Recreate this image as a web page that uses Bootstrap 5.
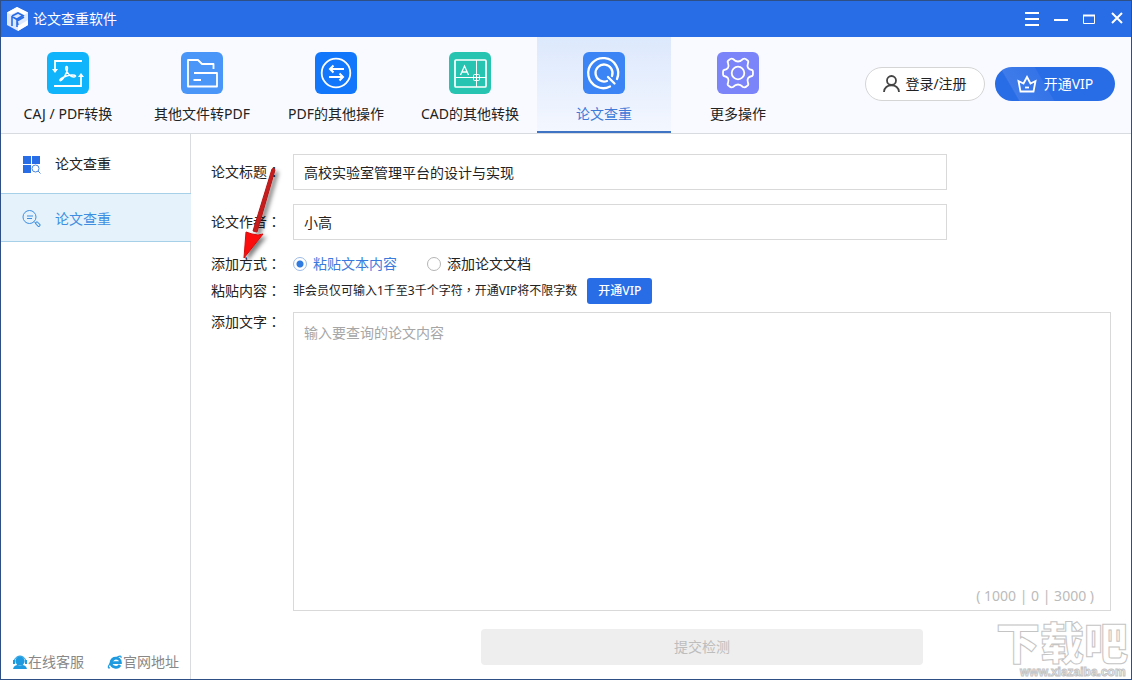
<!DOCTYPE html>
<html lang="zh-CN">
<head>
<meta charset="utf-8">
<meta name="viewport" content="width=device-width, initial-scale=1">
<title>论文查重软件</title>
<link href="https://cdn.jsdelivr.net/npm/bootstrap@5.3.0/dist/css/bootstrap.min.css" rel="stylesheet">
<script src="https://cdn.jsdelivr.net/npm/bootstrap@5.3.0/dist/js/bootstrap.bundle.min.js" defer></script>
<style>
  :root { --brand: #286ce6; --line: #d9d9d9; }
  body { font-family: "Noto Sans", "Noto Sans CJK SC", sans-serif; font-size: 14px; line-height: 20px; color: #222; }
  a { text-decoration: none; color: inherit; }
  svg { display: block; flex: none; }
  .app-window { min-height: 100vh; border: 1px solid #2d4f86; background: #fff; overflow: hidden; }
  .title-bar { background: var(--brand); height: 36px; padding: 0 5px; color: #fff; }
  .title-bar button { border: 0; background: none; padding: 0; color: #fff; }
  .window-tools { gap: 14px; padding-right: 2px; }
  .tool-bar { background: #f8faff; border-bottom: 1px solid #d8dbe0; padding-right: 16px; }
  .tool-tab { width: 134px; height: 96px; padding-top: 15px; gap: 10px; border-bottom: 2px solid transparent; color: #222; white-space: nowrap; }
  .tool-tab.active { color: #3f7ad8; border-bottom-color: #3f73c4; background: linear-gradient(#dce8fc, #f3f7ff); }
  .account { gap: 10px; margin-bottom: 2px; }
  .pill { height: 34px; width: 120px; border-radius: 17px; padding: 0; font-size: 14px; line-height: 20px; gap: 5px; white-space: nowrap; }
  .pill-login, .pill-login:hover { background: #fff; border: 1px solid #d5d5d5; color: #222; }
  .pill-vip, .pill-vip:hover { border: 0; color: #fff; gap: 7px; background: linear-gradient(60deg, var(--brand) 17%, #3f7be9 18%, #3474e8 42%, var(--brand) 43%); }
  .side-bar { width: 190px; border-right: 1px solid #d8dbe0; }
  .side-link { height: 49px; padding-left: 21px; gap: 14px; border: 1px solid transparent; border-width: 1px 0; }
  .side-link:first-child { height: 59px; border: 0; padding-top: 1px; }
  .side-link.active { background: #e5f2fb; border-color: #a6cfe8; color: #3f8fe0; margin-right: -1px; padding-top: 2px; }
  .side-foot { color: #888; padding: 0 11px 7px 11px; }
  .form-area { padding: 20px 20px 14px; }
  .line-label { width: 82px; flex: none; white-space: nowrap; }
  .gap-row { margin-top: 14px; }
  .ways { gap: 30px; }
  .way-item { gap: 6px; }
  .text-field { width: 80%; height: 36px; border: 1px solid var(--line); border-radius: 0; padding: 0 10px; font-size: 14px; line-height: 20px; color: #222; }
  .text-area { border: 1px solid var(--line); border-radius: 0; padding: 10px; font-size: 14px; line-height: 20px; resize: none; }
  .text-area::placeholder { color: #a6a6a6; }
  .form-check-input.way { width: 14px; height: 14px; margin: 0; border: 1px solid #b5b5b5; box-shadow: none; background-color: #fff; }
  .form-check-input.way:checked { background-color: #fff; border-color: #9dbbe4; background-image: radial-gradient(circle, #2f7be0 3px, #fff 4px); }
  .way:checked + label { color: #3a7bdd; }
  .note-row { gap: 10px; }
  .note { font-size: 12px; }
  .small-vip { height: 26px; width: 65px; padding: 0; border: 0; border-radius: 3px; background: var(--brand); color: #fff; font-size: 12px; line-height: 20px; font-weight: 500; }
  .counter { position: absolute; right: 17px; bottom: 5px; color: #bbb; white-space: pre; }
  .submit-row { margin-top: 18px; }
  .submit { width: 54%; height: 36px; border: 0; border-radius: 4px; }
  .submit:disabled { background: #eee; color: #bdbdbd; opacity: 1; font-size: 14px; line-height: 20px; }
  .pointer { position: absolute; left: 238px; top: 162px; pointer-events: none; }
  .site-mark { position: absolute; right: 1px; bottom: 0; pointer-events: none; }
</style>
</head>
<body>
<div class="app-window position-relative d-flex flex-column">
  <header class="title-bar d-flex align-items-center justify-content-between">
    <div class="d-flex align-items-center gap-1">
      <svg width="23" height="24" viewBox="0 0 23 24"><path d="M11 0 22 5.500v12.500l-10 6L1 18V5.500z" fill="#dfe9fd"/><path d="M11 0l11 5.500-4 2.500-7-3.500L5 7.500 1 5.500z" fill="#fff"/><path d="M12 24v-5l10-6v5z" fill="#fff"/><path d="M6 9l6-3 5 2.500-6 3.500v8M6 9v10M11 12.500L6 9.500M12 18l-1-4 7-4" stroke="#286ce6" stroke-width="1.600" fill="none"/></svg>
      <span>论文查重软件</span>
    </div>
    <div class="window-tools d-flex align-items-center">
      <button aria-label="菜单"><svg width="16" height="16" viewBox="0 0 16 16"><path d="M1 2h14M1 8h14M1 14h14" stroke="#fff" stroke-width="2"/></svg></button>
      <button aria-label="最小化"><svg width="14" height="16" viewBox="0 0 14 16"><path d="M0 9h14" stroke="#fff" stroke-width="2"/></svg></button>
      <button aria-label="最大化"><svg width="14" height="16" viewBox="0 0 14 16"><path d="M1.500 4.500h11v8h-11z" fill="none" stroke="#fff"/><path d="M1 4.500h12" stroke="#fff" stroke-width="2"/></svg></button>
      <button aria-label="关闭"><svg width="14" height="16" viewBox="0 0 14 16"><path d="M2 2l10 10M12 2L2 12" stroke="#fff" stroke-width="2"/></svg></button>
    </div>
  </header>

  <div class="tool-bar d-flex align-items-center">
    <nav class="d-flex flex-grow-1">
      <a href="#" class="tool-tab d-flex flex-column align-items-center">
        <svg width="42" height="42" viewBox="0 0 42 42"><rect width="42" height="42" rx="6" fill="#0fb4fb"/><g fill="none" stroke="#fff" stroke-width="1.800"><path d="M35 9H8v9M7 34h27V24"/><path d="M19.500 14.500c-2 .5 0 6 3.500 9 2 1.700 6 2 5.500.3-.8-1.600-6-.8-9 .2s-7.500 3.500-6.500 4.500 4.500-3 6.500-8c1-2.500 1.500-6 0-6z" stroke-width="1.500"/></g><path d="M5 17h6l-3 4zM31 25h6l-3-4z" fill="#fff"/></svg>
        <span>CAJ / PDF转换</span></a>
      <a href="#" class="tool-tab d-flex flex-column align-items-center">
        <svg width="42" height="42" viewBox="0 0 42 42"><rect width="42" height="42" rx="6" fill="#4a96f8"/><path d="M32.500 17v-5H21l-4-4H7v26.500h29V21H13M12.500 28H20" fill="none" stroke="#fff" stroke-width="1.800" stroke-linejoin="round"/></svg>
        <span>其他文件转PDF</span></a>
      <a href="#" class="tool-tab d-flex flex-column align-items-center">
        <svg width="42" height="42" viewBox="0 0 42 42"><rect width="42" height="42" rx="6" fill="#1277fb"/><g fill="none" stroke="#fff"><circle cx="21" cy="21" r="14.300" stroke-width="1.800"/><path d="M29 17H15M18.500 13.500L15 17l3.500 3.500M14 25h14M24.500 21.500L28 25l-3.500 3.500" stroke-width="2"/></g></svg>
        <span>PDF的其他操作</span></a>
      <a href="#" class="tool-tab d-flex flex-column align-items-center">
        <svg width="42" height="42" viewBox="0 0 42 42"><rect width="42" height="42" rx="6" fill="#27c5b1"/><g fill="none" stroke="#fff"><rect x="6" y="8" width="31" height="27" rx="1" stroke-width="1.700"/><path d="M7 25.500h30M27.500 8v27"/><rect x="24.500" y="22.500" width="6" height="6" rx="1"/><path d="M11.500 23l4-9 4 9M13 20h5" stroke-width="1.300"/></g></svg>
        <span>CAD的其他转换</span></a>
      <a href="#" class="tool-tab active d-flex flex-column align-items-center">
        <svg width="42" height="42" viewBox="0 0 42 42"><rect width="42" height="42" rx="6" fill="#3a84f5"/><g fill="none" stroke="#fff" stroke-width="2.300" stroke-linecap="round"><path d="M27 34.500A15 15 0 1 1 34 27M24 29A8.500 8.500 0 1 1 29 24M25 25l6.500 6.500"/></g></svg>
        <span>论文查重</span></a>
      <a href="#" class="tool-tab d-flex flex-column align-items-center">
        <svg width="42" height="42" viewBox="0 0 42 42"><rect width="42" height="42" rx="6" fill="#7b84f9"/><g fill="none" stroke="#fff" stroke-width="1.800" stroke-linejoin="round"><circle cx="21" cy="21" r="6.300"/><path d="M16 7q-2-1-4 1-2 1-1 3 2 6-4 7-1 0-1 3t1 3q6 1 4 7-1 2 1 3 2 2 4 1 5-5 10 0 2 1 4-1 2-1 1-3-2-6 4-7 1 0 1-3t-1-3q-6-1-4-7 1-2-1-3-2-2-4-1-5 5-10 0z"/></g></svg>
        <span>更多操作</span></a>
    </nav>
    <div class="account d-flex">
      <button class="btn pill pill-login d-flex align-items-center justify-content-center">
        <svg width="17" height="18" viewBox="0 0 17 18" fill="none" stroke="#444" stroke-width="1.800"><circle cx="8.500" cy="5.500" r="4.500"/><path d="M1 17c0-9 15-9 15 0"/></svg>登录/注册</button>
      <button class="btn pill pill-vip d-flex align-items-center justify-content-center">
        <svg width="20" height="18" viewBox="0 0 20 18" fill="none" stroke="#fff" stroke-width="1.800"><path d="M1.500 6l2 10.500h13l2-10.500-5 2.500L10 2 6.500 8.500z"/><path d="M8 12.500h4"/></svg>开通VIP</button>
    </div>
  </div>

  <div class="d-flex flex-grow-1">
    <aside class="side-bar flex-shrink-0 d-flex flex-column justify-content-between">
      <nav>
        <a href="#" class="side-link d-flex align-items-center">
          <svg width="19" height="19" viewBox="0 0 19 19"><path d="M1 1h8v8H1zM10 1h8v8h-8zM1 10h8v8H1z" fill="#286ce6"/><path d="M9.500 9.500h9v9h-9z" fill="#fff"/><circle cx="13.500" cy="13.500" r="3.500" fill="none" stroke="#4a86dd"/><path d="M16 16l2.500 2.500" stroke="#4a86dd"/></svg>论文查重</a>
        <a href="#" class="side-link active d-flex align-items-center">
          <svg width="19" height="19" viewBox="0 0 19 19" fill="none" stroke="#3f8fe0"><circle cx="7.500" cy="8" r="6.500"/><path d="M5 7h6M5 9.500h5M12 12.500l2 2"/><rect x="14.500" y="12.500" width="2.500" height="5" rx="1" transform="rotate(-45 16 15)"/></svg>论文查重</a>
      </nav>
      <div class="side-foot d-flex justify-content-between">
        <a href="#" class="d-flex align-items-center"><svg width="16" height="16" viewBox="0 0 16 16"><path d="M2 8a6 6 0 0 1 12 0" stroke="#1e9be0" fill="none"/><path d="M1 6h2v4H1zM13 6h2v4h-2z" fill="#1e9be0"/><circle cx="8" cy="7" r="4.700" fill="#1e9be0"/><path d="M1 15q1-4 5-4l2 1 2-1q4 0 5 4z" fill="#1e9be0"/></svg>在线客服</a>
        <a href="#" class="d-flex align-items-center"><svg width="16" height="16" viewBox="0 0 16 16" fill="none" stroke="#1e9be0"><path d="M4 8.700h9.500c0-6-9.500-6-9.500 0 0 5 7 6 9 2.300" stroke-width="2.700"/><path d="M3 13.500c-3 2-2-3 3-7 4-4 9-6 8-2.500" stroke-width="1.200"/></svg>官网地址</a>
      </div>
    </aside>

    <form class="form-area flex-grow-1 d-flex flex-column">
      <div class="d-flex align-items-center">
        <label class="line-label" for="paper-title">论文标题<span lang="zh-TW">：</span></label>
        <div class="flex-grow-1"><input id="paper-title" class="form-control text-field" value="高校实验室管理平台的设计与实现"></div>
      </div>
      <div class="gap-row d-flex align-items-center">
        <label class="line-label" for="paper-author">论文作者<span lang="zh-TW">：</span></label>
        <div class="flex-grow-1"><input id="paper-author" class="form-control text-field" value="小高"></div>
      </div>
      <div class="gap-row d-flex align-items-center">
        <span class="line-label">添加方式<span lang="zh-TW">：</span></span>
        <div class="ways d-flex">
          <div class="way-item d-flex align-items-center"><input class="form-check-input way" type="radio" name="way" id="way-text" checked><label for="way-text">粘贴文本内容</label></div>
          <div class="way-item d-flex align-items-center"><input class="form-check-input way" type="radio" name="way" id="way-file"><label for="way-file">添加论文文档</label></div>
        </div>
      </div>
      <div class="d-flex align-items-center mt-1">
        <span class="line-label">粘贴内容<span lang="zh-TW">：</span></span>
        <div class="note-row d-flex align-items-center"><span class="note">非会员仅可输入1千至3千个字符<span lang="zh-TW">，</span>开通VIP将不限字数</span><button type="button" class="small-vip">开通VIP</button></div>
      </div>
      <div class="d-flex flex-grow-1 mt-2">
        <label class="line-label" for="paper-body">添加文字<span lang="zh-TW">：</span></label>
        <div class="flex-grow-1 position-relative d-flex">
          <textarea id="paper-body" class="form-control text-area" placeholder="输入要查询的论文内容"></textarea>
          <span class="counter">( 1000 | 0 | 3000 )</span>
        </div>
      </div>
      <div class="submit-row d-flex">
        <span class="line-label"></span>
        <div class="flex-grow-1 text-center"><button class="submit" disabled>提交检测</button></div>
      </div>
    </form>
  </div>

  <svg class="pointer" width="44" height="100" viewBox="0 0 44 100"><defs><filter id="soft" x="-30%" y="-10%" width="170%" height="130%"><feDropShadow dx="3" dy="3" stdDeviation="2" flood-opacity=".5"/></filter></defs><g filter="url(#soft)"><path d="M33 6q2-2 3 1L18 69l-4-1z" fill="#c81e1e" stroke="#b01818"/><path d="M7 69l6 2 6 1 5-1L5 95z" fill="#fb0808" stroke="#d01010"/></g></svg>

  <svg class="site-mark" width="136" height="64" viewBox="0 0 136 64"><g fill="#fff" stroke="#c4c4c4" stroke-width="1" font-weight="900"><text x="2" y="45" font-size="44" font-family="Noto Sans CJK SC, sans-serif">下载吧</text><text x="26" y="61" font-size="12" font-family="Liberation Sans, sans-serif">www.xiazaiba.com</text></g></svg>
</div>
</body>
</html>
